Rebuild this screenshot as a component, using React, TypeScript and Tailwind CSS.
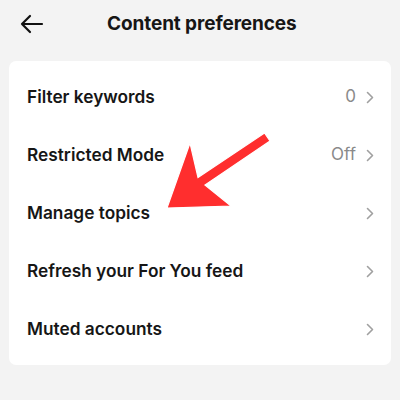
const rows = [
  { label: "Filter keywords", value: "0" },
  { label: "Restricted Mode", value: "Off" },
  { label: "Manage topics", value: "" },
  { label: "Refresh your For You feed", value: "" },
  { label: "Muted accounts", value: "" },
]

function Chevron() {
  return (
    <svg width="8" height="13" viewBox="0 0 8 13" fill="none" className="ml-[10px]">
      <path d="M1.5 1.5 L6.5 6.5 L1.5 11.5" stroke="#a0a0a0" strokeWidth="1.6" strokeLinecap="round" strokeLinejoin="round" />
    </svg>
  )
}

export default function App() {
  return (
    <div className="relative h-[400px] w-[400px] overflow-hidden bg-[#f3f3f3] font-['Inter',sans-serif] text-[#161616]">
      <header className="flex h-[48px] items-center px-[19px]">
        <svg width="26" height="20" viewBox="0 0 26 20" fill="none">
          <path d="M23 10 H3 M11 2 L3 10 L11 18" stroke="#111" strokeWidth="2.2" strokeLinecap="round" strokeLinejoin="round" />
        </svg>
        <h1 className="ml-[62px] text-[19px] font-bold tracking-[-0.1px]">Content preferences</h1>
      </header>
      <div className="mx-[9px] mt-[13px] rounded-[7px] bg-white py-[7px]">
        {rows.map((r) => (
          <div key={r.label} className="flex h-[58px] items-center pl-[18px] pr-[17px]">
            <span className="flex-1 text-[17.3px] font-semibold">{r.label}</span>
            {r.value && <span className="text-[17px] text-[#8a8a8a]">{r.value}</span>}
            <Chevron />
          </div>
        ))}
      </div>
      <svg className="absolute left-0 top-0" width="400" height="400" viewBox="0 0 400 400">
        <polygon
          points="264.5,133 270,141 205,185 231,206 167,208 190,143 198,177.5"
          fill="#ff2e2e"
          stroke="#fff"
          strokeWidth="1.2"
          strokeLinejoin="miter"
        />
      </svg>
    </div>
  )
}
